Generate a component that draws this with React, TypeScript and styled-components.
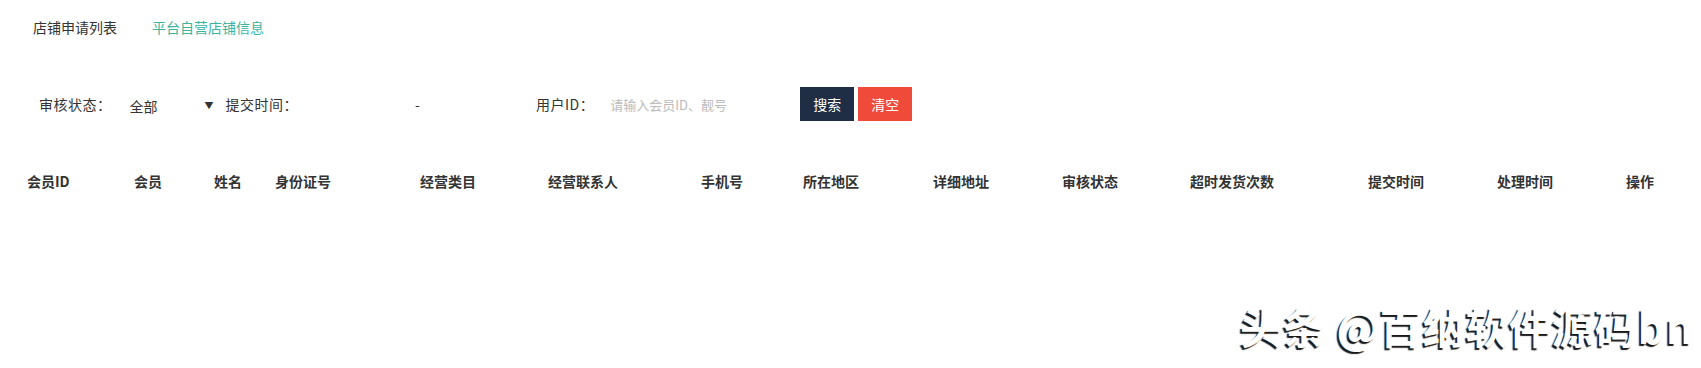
import React from 'react'
import styled, { createGlobalStyle } from 'styled-components'

const GlobalStyle = createGlobalStyle`
  html, body {
    margin: 0;
    padding: 0;
    background: #fff;
  }
  body {
    font-family: "Noto Sans CJK SC", "Noto Sans", sans-serif;
    color: #333;
  }
`

const Page = styled.div`
  position: relative;
  width: 1701px;
  height: 368px;
  overflow: hidden;
`

const Tabs = styled.div`
  display: flex;
  align-items: center;
  gap: 35px;
  height: 54px;
  padding-left: 33px;
  font-size: 14px;
`

interface TabProps {
  $active?: boolean
}

const Tab = styled.div<TabProps>`
  color: ${(p) => (p.$active ? '#3cb4a0' : '#333')};
  cursor: pointer;
`

const FilterBar = styled.div`
  display: flex;
  align-items: center;
  height: 36px;
  margin-top: 32px;
  padding-left: 39px;
  font-size: 14px;
`

const Label = styled.span`
  color: #333;
  white-space: nowrap;
  letter-spacing: 0.5px;
`

const Select = styled.div`
  display: flex;
  align-items: center;
  justify-content: space-between;
  width: 84px;
  margin: 0 12px 0 18px;
  padding-top: 3px;
  color: #333;

  & i {
    font-style: normal;
    font-size: 9px;
  }
`

const DateRange = styled.div`
  display: flex;
  align-items: center;
  width: 238px;
  padding-left: 117px;
  box-sizing: border-box;
  color: #333;
`

const Input = styled.div`
  width: 150px;
  margin: 0 40px 0 16px;
  color: #bbb;
  font-size: 13px;
  white-space: nowrap;
`

interface BtnProps {
  $tone: 'dark' | 'red'
}

const Button = styled.button<BtnProps>`
  height: 34px;
  width: 54px;
  margin-right: 4px;
  border: none;
  padding: 0;
  color: #fff;
  font-family: inherit;
  font-size: 14px;
  background: ${(p) => (p.$tone === 'dark' ? '#1f2d45' : '#f04a3a')};
`

const HeadRow = styled.div`
  display: grid;
  grid-template-columns: 107px 80px 61px 145px 128px 153px 102px 130px 129px 128px 178px 129px 129px 80px;
  align-items: center;
  height: 40px;
  margin-top: 39px;
  padding-left: 27px;
  font-size: 14px;
  font-weight: 700;
  color: #333;
`

const Watermark = styled.div`
  position: absolute;
  left: 1240px;
  top: 305px;
  font-size: 42px;
  font-weight: 700;
  letter-spacing: 1px;
  line-height: 1;
  color: #fff;
  white-space: nowrap;
  text-shadow: -2px 2px 1px rgba(0, 0, 0, 0.9);
`

const columns = [
  '会员ID',
  '会员',
  '姓名',
  '身份证号',
  '经营类目',
  '经营联系人',
  '手机号',
  '所在地区',
  '详细地址',
  '审核状态',
  '超时发货次数',
  '提交时间',
  '处理时间',
  '操作',
]

const App: React.FC = () => {
  return (
    <Page>
      <GlobalStyle />
      <Tabs>
        <Tab>店铺申请列表</Tab>
        <Tab $active>平台自营店铺信息</Tab>
      </Tabs>
      <FilterBar>
        <Label>审核状态：</Label>
        <Select>
          <span>全部</span>
          <i>▼</i>
        </Select>
        <Label>提交时间：</Label>
        <DateRange>-</DateRange>
        <Label>用户ID：</Label>
        <Input>请输入会员ID、靓号</Input>
        <Button $tone="dark">搜索</Button>
        <Button $tone="red">清空</Button>
      </FilterBar>
      <HeadRow>
        {columns.map((c) => (
          <div key={c}>{c}</div>
        ))}
      </HeadRow>
      <Watermark>头条 @百纳软件源码bn</Watermark>
    </Page>
  )
}

export default App
